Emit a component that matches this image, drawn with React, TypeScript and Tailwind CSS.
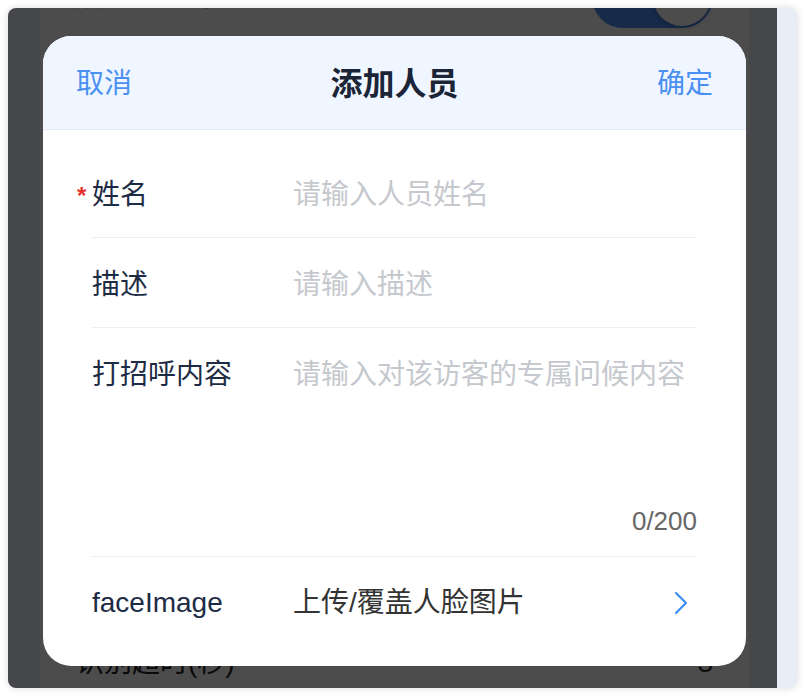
const font = {
  fontFamily: '"Liberation Sans", "Noto Sans CJK SC", sans-serif',
};

const FormRow = ({
  label,
  required,
  placeholder,
}: {
  label: string;
  required?: boolean;
  placeholder: string;
}) => {
  return (
    <div className="flex border-b border-[#eceef1] pt-[27px] pb-[22px] text-[28px] leading-[40px]">
      <div className="relative w-[201px] shrink-0 text-[#1d2b45]">
        {required ? (
          <span className="absolute -left-[15px] top-[1px] text-[24px] font-bold text-[#e5322d]">
            *
          </span>
        ) : null}
        <span>{label}</span>
      </div>
      <input
        className="min-w-0 flex-1 bg-transparent p-0 text-[#333] outline-none placeholder:text-[#c5c8cd]"
        placeholder={placeholder}
      />
    </div>
  );
};

const AddPersonSheet = () => {
  return (
    <div className="absolute left-[35px] top-[28px] w-[703px] h-[630px] overflow-hidden rounded-[28px] bg-white">
      <div className="flex h-[94px] items-center justify-between border-b border-[#e3eaf4] bg-[#f0f6ff] px-[33px] pt-[2px]">
        <button className="text-[28px] text-[#4a90f2]">取消</button>
        <h2 className="text-[32px] font-bold text-[#1b2537]">添加人员</h2>
        <button className="text-[28px] text-[#4a90f2]">确定</button>
      </div>

      <div className="flex flex-col px-[49px] pt-[18px]">
        <FormRow label="姓名" required placeholder="请输入人员姓名" />
        <FormRow label="描述" placeholder="请输入描述" />

        <div className="flex flex-col border-b border-[#eceef1] pt-[27px] pb-[18px] text-[28px]">
          <div className="flex">
            <span className="w-[201px] shrink-0 leading-[40px] text-[#1d2b45]">
              打招呼内容
            </span>
            <textarea
              className="h-[149px] min-w-0 flex-1 resize-none bg-transparent p-0 leading-[40px] text-[#333] outline-none placeholder:text-[#c5c8cd]"
              placeholder="请输入对该访客的专属问候内容"
            />
          </div>
          <span className="self-end text-[26px] leading-[34px] text-[#666]">
            0/200
          </span>
        </div>

        <div className="flex items-center pt-[26px] pb-[43px] text-[28px] leading-[40px]">
          <span className="w-[201px] shrink-0 text-[#1d2b45]">faceImage</span>
          <span className="flex-1 text-[#333]">上传/覆盖人脸图片</span>
          <svg
            width="14"
            height="24"
            viewBox="0 0 14 24"
            fill="none"
            className="mr-[9px]"
          >
            <polyline
              points="2,2 12,12 2,22"
              stroke="#3d8ef5"
              strokeWidth="2.2"
              strokeLinecap="round"
              strokeLinejoin="round"
            />
          </svg>
        </div>
      </div>
    </div>
  );
};

export default function App() {
  return (
    <div className="h-[696px] w-[806px] bg-white pl-2 pt-2" style={font}>
      <div className="relative flex h-[680px] w-[789px] overflow-hidden rounded-[8px] bg-[#e8edf7] shadow-[0_0_8px_rgba(0,0,0,0.15)]">
        {/* settings page behind the sheet */}
        <div className="ml-[32px] flex w-[709px] flex-col bg-white">
          <div className="-mt-[56px] flex h-[90px] shrink-0 items-center justify-between pl-[34px] pr-[36px] text-[28px] text-[#222]">
            <span>陌生人识别提醒</span>
            <div className="flex h-[62px] w-[121px] items-center justify-end rounded-full bg-[#4d8cf7] p-[2px]">
              <div className="h-[58px] w-[58px] rounded-full bg-white shadow-[0_2px_4px_rgba(0,0,0,0.2)]" />
            </div>
          </div>
          <div className="h-[576px] shrink-0" />
          <div className="flex h-[90px] shrink-0 items-center justify-between pl-[36px] pr-[36px] text-[28px] text-[#222]">
            <span>识别超时(秒)</span>
            <span className="text-[#333]">3</span>
          </div>
        </div>

        <div className="absolute inset-y-0 left-0 w-[769px] bg-black/70" />

        <AddPersonSheet />
      </div>
    </div>
  );
}
